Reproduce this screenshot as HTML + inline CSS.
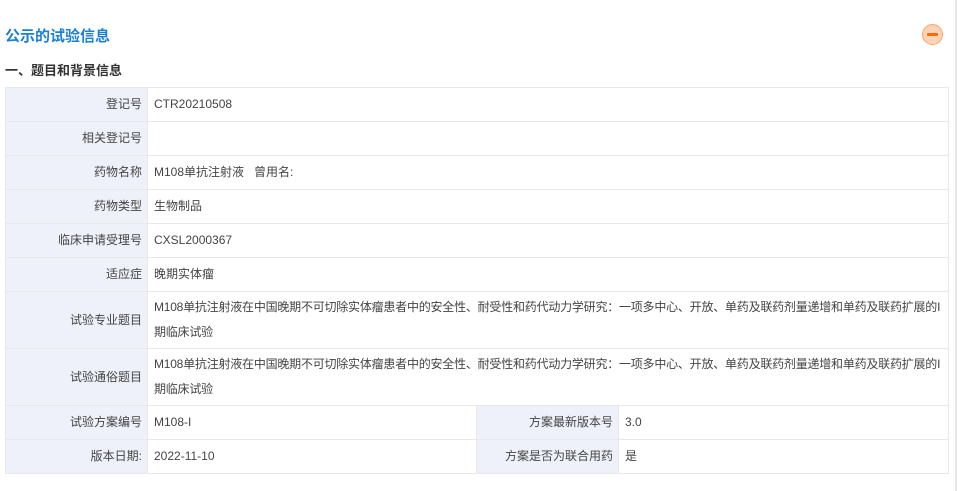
<!DOCTYPE html>
<html><head><meta charset="utf-8"><style>
body{margin:0;width:957px;height:491px;background:#fff;font-family:"Liberation Sans","Noto Sans CJK SC",sans-serif;position:relative;overflow:hidden}
.vl{position:absolute;left:955px;top:0;width:2px;height:491px;background:#e6e6e6}
h1{position:absolute;left:5px;top:25px;margin:0;font-size:15px;color:#1a7fd6;font-weight:bold}
h2{position:absolute;left:5px;top:60px;margin:0;font-size:13px;color:#333;font-weight:bold}
.ic{position:absolute;left:922px;top:24px;width:19px;height:19px;border-radius:50%;background:#fdd3b8;border:1px solid #f9a46d}
.ic:after{content:"";position:absolute;left:4px;top:8px;width:11px;height:3px;background:#f56a0e;border-radius:1px}
table{position:absolute;left:5px;top:87px;width:944px;border-collapse:collapse;font-size:12px;color:#444;table-layout:fixed}
td{border:1px solid #e8e8e8;padding:0 6px;height:33px;line-height:25px;overflow:hidden}
td.l{background:#eef1f9;text-align:right;padding:0 5px 0 6px}
td.t{height:56px}
.w{white-space:nowrap;letter-spacing:-0.22px;padding-right:0}
</style></head><body>
<div class="vl"></div>
<h1>公示的试验信息</h1>
<div class="ic"></div>
<h2>一、题目和背景信息</h2>
<table>
<colgroup><col style="width:142px"><col style="width:329px"><col style="width:142px"><col></colgroup>
<tr><td class="l">登记号</td><td colspan="3">CTR20210508</td></tr>
<tr><td class="l">相关登记号</td><td colspan="3"></td></tr>
<tr><td class="l">药物名称</td><td colspan="3">M108单抗注射液&nbsp;&nbsp;&nbsp;曾用名:</td></tr>
<tr><td class="l">药物类型</td><td colspan="3">生物制品</td></tr>
<tr><td class="l">临床申请受理号</td><td colspan="3">CXSL2000367</td></tr>
<tr><td class="l">适应症</td><td colspan="3">晚期实体瘤</td></tr>
<tr><td class="l t">试验专业题目</td><td colspan="3" class="w">M108单抗注射液在中国晚期不可切除实体瘤患者中的安全性、耐受性和药代动力学研究：一项多中心、开放、单药及联药剂量递增和单药及联药扩展的I<br>期临床试验</td></tr>
<tr><td class="l t">试验通俗题目</td><td colspan="3" class="w">M108单抗注射液在中国晚期不可切除实体瘤患者中的安全性、耐受性和药代动力学研究：一项多中心、开放、单药及联药剂量递增和单药及联药扩展的I<br>期临床试验</td></tr>
<tr><td class="l">试验方案编号</td><td>M108-I</td><td class="l">方案最新版本号</td><td>3.0</td></tr>
<tr><td class="l">版本日期:</td><td>2022-11-10</td><td class="l">方案是否为联合用药</td><td>是</td></tr>
</table>
</body></html>
